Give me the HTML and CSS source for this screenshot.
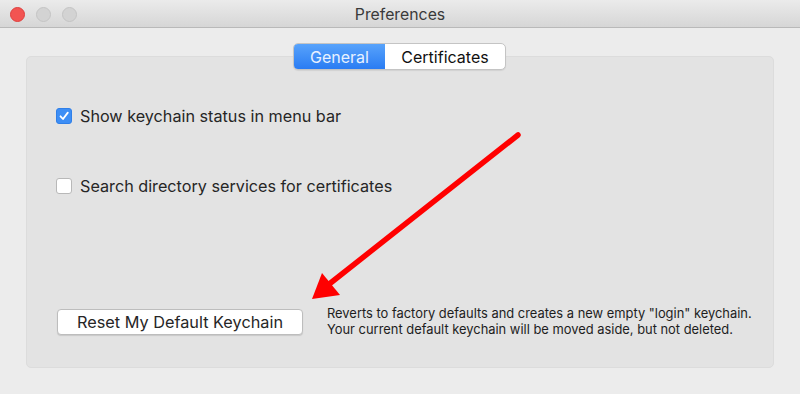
FILE: index.html
```html
<!DOCTYPE html>
<html lang="en">
<head>
    <meta charset="UTF-8">
    <title>Preferences</title>
    <link rel="stylesheet" href="styles.css">
</head>
<body>

    <div class="window">
        <!-- Barra de título -->
        <div class="titlebar">
            <div class="lights">
                <span class="light red"></span>
                <span class="light"></span>
                <span class="light"></span>
            </div>
            <div class="title">Preferences</div>
        </div>

        <div class="content">
            <div class="tabs">
                <span class="tab active">General</span>
                <span class="tab">Certificates</span>
            </div>

            <div class="panel">
                <label class="check">
                    <span class="box checked">
                        <svg width="12" height="12" viewBox="0 0 12 12"><path d="M2.5 6.3 L5 9 L9.8 2.6" fill="none" stroke="#fff" stroke-width="1.8" stroke-linecap="round" stroke-linejoin="round"/></svg>
                    </span>
                    Show keychain status in menu bar
                </label>

                <label class="check second">
                    <span class="box"></span>
                    Search directory services for certificates
                </label>

                <div class="reset">
                    <button class="reset-btn">Reset My Default Keychain</button>
                    <p class="desc">Reverts to factory defaults and creates a new empty "login" keychain.<br>Your current default keychain will be moved aside, but not deleted.</p>
                </div>
            </div>
        </div>

        <!-- Seta vermelha por cima -->
        <svg class="arrow" width="800" height="394" viewBox="0 0 800 394">
            <line x1="518" y1="135" x2="328" y2="285" stroke="#f00" stroke-width="5.5" stroke-linecap="round"/>
            <polygon points="312,299 322,273 340,295" fill="#f00"/>
        </svg>
    </div>

</body>
</html>
```

FILE: styles.css
```css
/* Janela de preferências */
body {
    margin: 0;
    padding: 0;
    background-color: #ececec;
    font-family: Inter, "Noto Sans", sans-serif;
    color: #262626;
}

.window {
    position: relative;
    width: 800px;
    height: 394px;
    overflow: hidden;
}

.titlebar {
    height: 28px;
    display: flex;
    align-items: center;
    justify-content: center;
    position: relative;
    background: linear-gradient(#ebebeb, #d6d6d6);
    border-bottom: 1px solid #b9b9b9;
    box-sizing: border-box;
}

.lights {
    position: absolute;
    left: 10px;
    top: 7px;
    display: flex;
    gap: 11px;
}

.light {
    width: 15px;
    height: 15px;
    border-radius: 50%;
    background-color: #d3d3d3;
    border: 1px solid #c4c4c4;
    box-sizing: border-box;
}

.light.red {
    background-color: #f25452;
    border-color: #df3f3d;
}

.title {
    font-size: 15.8px;
    color: #3a3a3a;
    margin-top: 1px;
}

.content {
    display: flex;
    flex-direction: column;
    align-items: center;
    padding-top: 15px;
}

.tabs {
    display: flex;
    height: 27px;
    box-sizing: border-box;
    border: 1px solid #c4c4c4;
    border-radius: 5px;
    background-color: #fff;
    box-shadow: 0 1px 1px rgba(0, 0, 0, 0.08);
    position: relative;
    z-index: 1;
    overflow: hidden;
    margin-left: -1px;
}

.tab {
    display: flex;
    align-items: center;
    justify-content: center;
    font-size: 16px;
    color: #111;
}

.tab:first-child {
    width: 91px;
}

.tab:last-child {
    width: 120px;
}

.tab.active {
    background: linear-gradient(#58a3fb, #2a7cf3);
    color: #e8f1ff;
}

.panel {
    align-self: stretch;
    margin: -14px 26px 0 26px;
    height: 312px;
    box-sizing: border-box;
    background-color: #e3e3e3;
    border: 1px solid #dcdcdc;
    border-radius: 5px;
    padding: 50px 0 0 29px;
    display: flex;
    flex-direction: column;
    align-items: flex-start;
}

.check {
    display: flex;
    align-items: center;
    gap: 8px;
    font-size: 16.2px;
    color: #262626;
    height: 18px;
}

.check.second {
    margin-top: 52px;
}

.box {
    width: 16px;
    height: 16px;
    box-sizing: border-box;
    border: 1px solid #b8b8b8;
    border-radius: 3px;
    background-color: #fff;
    display: flex;
    align-items: center;
    justify-content: center;
}

.box.checked {
    background-color: #3d8ef5;
    border-color: #2f7fe8;
}

.reset {
    display: flex;
    align-items: center;
    margin-top: 111px;
}

.reset-btn {
    width: 246px;
    height: 26px;
    margin-left: 1px;
    background-color: #fff;
    border: 1px solid #bdbdbd;
    border-radius: 4px;
    box-shadow: 0 1px 1px rgba(0, 0, 0, 0.12);
    font-family: Inter, "Noto Sans", sans-serif;
    font-size: 16.3px;
    color: #262626;
    padding: 0;
}

.desc {
    margin: 0 0 0 24px;
    font-size: 12.9px;
    line-height: 16px;
    color: #1e1e1e;
}

.arrow {
    position: absolute;
    left: 0;
    top: 0;
    pointer-events: none;
}
```
